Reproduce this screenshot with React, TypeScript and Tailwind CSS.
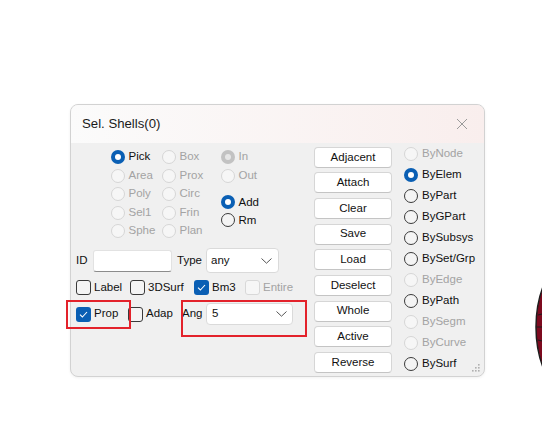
import React from "react";

const F = { fontFamily: '"Liberation Sans", Arial, sans-serif' };

function Radio({ label, state, disabled, w }: { label: string; state?: "on"; disabled?: boolean; w?: string }) {
  let circle: React.ReactNode;
  if (state === "on" && !disabled) {
    circle = (
      <span className="flex items-center justify-center w-[14px] h-[14px] rounded-full bg-[#0a5fb4] shrink-0">
        <span className="w-[6px] h-[6px] rounded-full bg-white" />
      </span>
    );
  } else if (state === "on" && disabled) {
    circle = (
      <span className="flex items-center justify-center w-[14px] h-[14px] rounded-full bg-[#c2c2c2] shrink-0">
        <span className="w-[6px] h-[6px] rounded-full bg-[#e6e6e6]" />
      </span>
    );
  } else if (disabled) {
    circle = <span className="w-[14px] h-[14px] rounded-full border border-[#d6d6d6] bg-[#f6f6f6] shrink-0" />;
  } else {
    circle = <span className="w-[14px] h-[14px] rounded-full border border-[#3a3a3a] bg-[#f4f4f4] shrink-0" />;
  }
  return (
    <div className={`flex items-center gap-[4px] ${w ?? ""}`}>
      {circle}
      <span className={`text-[11.5px] leading-none ${disabled ? "text-[#a3a3a3]" : "text-[#111]"}`}>{label}</span>
    </div>
  );
}

function Check({ label, checked, disabled, w }: { label: string; checked?: boolean; disabled?: boolean; w?: string }) {
  let box: React.ReactNode;
  if (checked) {
    box = (
      <span className="flex items-center justify-center w-[15px] h-[15px] rounded-[3px] bg-[#0a5fb4] shrink-0">
        <svg width="9" height="7" viewBox="0 0 9 7">
          <path d="M1 3.6 L3.4 6 L8 1" fill="none" stroke="white" strokeWidth="1.1" />
        </svg>
      </span>
    );
  } else if (disabled) {
    box = <span className="w-[15px] h-[15px] rounded-[3px] border border-[#d8d8d8] bg-[#f6f6f6] shrink-0" />;
  } else {
    box = <span className="w-[15px] h-[15px] rounded-[3px] border border-[#3a3a3a] bg-[#f4f4f4] shrink-0" />;
  }
  return (
    <div className={`flex items-center gap-[3px] ${w ?? ""}`}>
      {box}
      <span className={`text-[11.5px] leading-none ${disabled ? "text-[#a3a3a3]" : "text-[#111]"}`}>{label}</span>
    </div>
  );
}

function Chevron() {
  return (
    <svg width="11" height="6" viewBox="0 0 11 6">
      <path d="M0.5 0.5 L5.5 5.2 L10.5 0.5" fill="none" stroke="#555" strokeWidth="1" />
    </svg>
  );
}

function Btn({ label }: { label: string }) {
  return (
    <div className="h-[21px] w-[78px] flex items-center justify-center bg-white border border-[#d6d6d6] border-b-[#c4c4c4] rounded-[4px] text-[11.5px] text-[#111]">
      {label}
    </div>
  );
}

export default function App() {
  const buttons = ["Adjacent", "Attach", "Clear", "Save", "Load", "Deselect", "Whole", "Active", "Reverse"];
  const right: [string, boolean, boolean][] = [
    ["ByNode", false, true],
    ["ByElem", true, false],
    ["ByPart", false, false],
    ["ByGPart", false, false],
    ["BySubsys", false, false],
    ["BySet/Grp", false, false],
    ["ByEdge", false, true],
    ["ByPath", false, false],
    ["BySegm", false, true],
    ["ByCurve", false, true],
    ["BySurf", false, false],
  ];
  return (
    <div className="relative w-[542px] h-[441px] bg-white overflow-hidden" style={F}>
      {/* window */}
      <div className="absolute left-[70px] top-[104px] w-[415px] h-[273px] rounded-[8px] border border-[#d2d2d2] bg-[#f0f0f0] overflow-hidden flex flex-col shadow-[0_1px_3px_rgba(0,0,0,0.06)]">
        <div className="h-[38px] shrink-0 flex items-center justify-between bg-gradient-to-r from-[#fbfbfb] to-[#f9eeed] pl-[11px] pr-[16px]">
          <span className="text-[13.2px] text-[#1a1a1a]">Sel. Shells(0)</span>
          <svg width="12" height="12" viewBox="0 0 12 12">
            <path d="M1 1 L11 11 M11 1 L1 11" stroke="#9a9a9a" strokeWidth="1" />
          </svg>
        </div>
        <div className="relative flex-1 flex">
          {/* left panel */}
          <div className="w-[238px] ml-[5px] flex flex-col">
            <div className="flex pt-[4.75px] pl-[34.5px]">
              <div className="flex flex-col w-[51px]">
                {[["Pick", true], ["Area", false], ["Poly", false], ["Sel1", false], ["Sphe", false]].map(([l, on]) => (
                  <div key={l as string} className="h-[18.5px] flex items-center">
                    <Radio label={l as string} state={on ? "on" : undefined} disabled={!on} />
                  </div>
                ))}
              </div>
              <div className="flex flex-col w-[59px]">
                {["Box", "Prox", "Circ", "Frin", "Plan"].map((l) => (
                  <div key={l} className="h-[18.5px] flex items-center">
                    <Radio label={l} disabled />
                  </div>
                ))}
              </div>
              <div className="flex flex-col">
                <div className="h-[18.5px] flex items-center">
                  <Radio label="In" state="on" disabled />
                </div>
                <div className="h-[18.5px] flex items-center">
                  <Radio label="Out" disabled />
                </div>
                <div className="h-[18px] mt-[8.5px] flex items-center">
                  <Radio label="Add" state="on" />
                </div>
                <div className="h-[18px] flex items-center">
                  <Radio label="Rm" />
                </div>
              </div>
            </div>
            {/* ID row */}
            <div className="flex items-center h-[25px] mt-[7.75px]">
              <span className="w-[17px] text-[11.5px] text-[#111]">ID</span>
              <div className="w-[79px] h-[22px] bg-white border border-[#e2e2e2] border-b-[#8c8c8c] rounded-[3px]" />
              <span className="ml-[5px] w-[29px] text-[11.5px] text-[#111]">Type</span>
              <div className="w-[73px] h-[25px] bg-white border border-[#dadada] rounded-[4px] flex items-center justify-between pl-[4px] pr-[6px]">
                <span className="text-[11.5px] text-[#111]">any</span>
                <Chevron />
              </div>
            </div>
            {/* checkbox row */}
            <div className="flex items-center h-[17px] mt-[6px]">
              <Check label="Label" w="w-[54px]" />
              <Check label="3DSurf" w="w-[64px]" />
              <Check label="Bm3" checked w="w-[51px]" />
              <Check label="Entire" disabled />
            </div>
            {/* prop row */}
            <div className="flex items-center h-[23px] mt-[6.5px]">
              <Check label="Prop" checked w="w-[52px]" />
              <Check label="Adap" w="w-[54px]" />
              <span className="w-[24px] text-[11.5px] text-[#111]">Ang</span>
              <div className="w-[87px] h-[22px] bg-white border border-[#dadada] rounded-[4px] flex items-center justify-between pl-[5px] pr-[5px]">
                <span className="text-[11.5px] text-[#111]">5</span>
                <Chevron />
              </div>
            </div>
          </div>
          {/* buttons */}
          <div className="flex flex-col gap-[4.65px] pt-[3.7px]">
            {buttons.map((b) => (
              <Btn key={b} label={b} />
            ))}
          </div>
          {/* right radios */}
          <div className="flex flex-col ml-[12px] pt-[0.5px]">
            {right.map(([l, on, dis]) => (
              <div key={l} className="h-[21px] flex items-center">
                <Radio label={l} state={on ? "on" : undefined} disabled={dis} />
              </div>
            ))}
          </div>
          {/* resize grip */}
          <svg className="absolute right-[3px] bottom-[3px]" width="10" height="10" viewBox="0 0 10 10">
            {[[8, 2], [5, 5], [8, 5], [2, 8], [5, 8], [8, 8]].map(([x, y], i) => (
              <rect key={i} x={x - 1} y={y - 1} width="1.6" height="1.6" fill="#b0b0b0" />
            ))}
          </svg>
        </div>
      </div>
      {/* annotations */}
      <div className="absolute left-[66px] top-[300px] w-[65px] h-[29px] border-2 border-[#e3222b]" />
      <div className="absolute left-[181px] top-[300px] w-[126px] h-[37px] border-2 border-[#e3222b]" />
      {/* partial object at right edge */}
      <svg className="absolute left-[530px] top-[285px]" width="12" height="85" viewBox="0 0 12 85">
        <ellipse cx="66" cy="42" rx="60" ry="85" fill="#7d0a1f" stroke="#1c1c1c" strokeWidth="1.5" />
        <path d="M8 30 L12 29 M6.5 42 L12 42 M8 55 L12 56" stroke="#1c1c1c" strokeWidth="1" />
      </svg>
    </div>
  );
}
